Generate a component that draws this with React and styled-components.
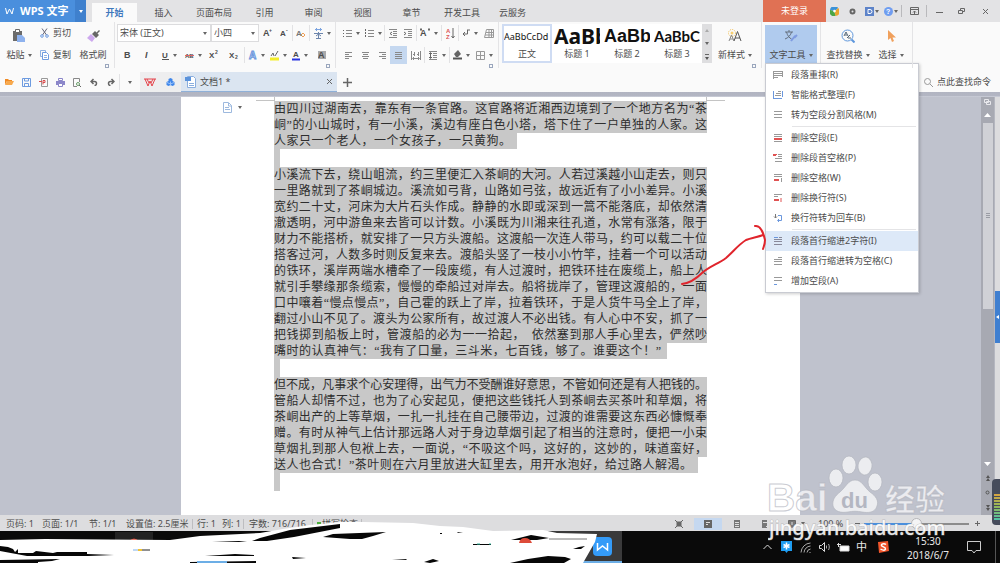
import React from "react";
import styled, { createGlobalStyle, css } from "styled-components";

const GlobalStyle = createGlobalStyle`
  *, *::before, *::after { box-sizing: border-box; }
  body {
    margin: 0;
    font-family: "Noto Sans", "Noto Sans CJK SC", sans-serif;
    font-size: 9px;
    line-height: 14px;
    color: #4c4c4c;
    background: #bfc2cd;
  }
  button, select, input {
    font: inherit;
    color: inherit;
    margin: 0;
    padding: 0;
    border: 0;
    background: none;
  }
`;

/* ---------- shared parts ---------- */

const Shell = styled.div`
  position: relative;
  display: flex;
  flex-direction: column;
  min-height: 100vh;
  overflow: hidden;
`;

const Caret = styled.i`
  flex: none;
  width: 0;
  height: 0;
  border: 2px solid transparent;
  border-top: 3px solid #666;
  border-bottom: 0;
`;

const Divider = styled.span`
  flex: none;
  width: 1px;
  height: ${(p) => p.$h || 16}px;
  background: ${(p) => p.$color || "#e2e2e4"};
`;

const Glyph = ({ w = 12, h = 12, box, children }) => (
  <svg width={w} height={h} viewBox={box || `0 0 ${w} ${h}`} fill="none" stroke="#666" aria-hidden="true">
    {children}
  </svg>
);

/* ---------- title bar ---------- */

const TitleBar = styled.header`
  display: flex;
  height: 22px;
  background: #e3e3e5;
`;

const Brand = styled.button`
  display: flex;
  align-items: center;
  gap: 6px;
  width: 75px;
  padding-left: 5px;
  background: #4a8fdd;
  color: #fff;
  font-size: 11px;
  font-weight: 700;
  white-space: nowrap;
`;

const BrandMore = styled.button`
  display: flex;
  align-items: center;
  justify-content: center;
  width: 11px;
  margin-right: 6px;
  background: #3f80cd;
  i { border-top-color: #fff; }
`;

const Tabs = styled.nav`
  display: flex;
  align-items: flex-end;
  flex: 1;
`;

const Tab = styled.button`
  min-width: 49px;
  height: 19px;
  padding: 0 8px;
  white-space: nowrap;
  ${(p) =>
    p.$active &&
    css`
      min-width: 45px;
      margin-right: 2px;
      background: #fafafa;
      color: #3f78bd;
      font-weight: 700;
    `}
`;

const Login = styled.button`
  width: 63px;
  background: #e07154;
  color: #fff;
`;

const WindowTools = styled.div`
  display: flex;
  align-items: center;
`;

const WindowButton = styled.button`
  display: flex;
  align-items: center;
  justify-content: center;
  gap: 1px;
  width: ${(p) => p.$w}px;
  height: 22px;
`;

/* ---------- ribbon ---------- */

const Ribbon = styled.section`
  position: relative;
  z-index: 3;
  display: flex;
  height: 50px;
  background: #fafafa;
`;

const Group = styled.div`
  position: relative;
  display: flex;
  flex: none;
  width: ${(p) => p.$w}px;
  height: 46px;
  padding: 1px 0 0 ${(p) => p.$pad || 0}px;
  border-right: 1px solid #e4e4e6;
`;

const Rows = styled.div`
  display: flex;
  flex-direction: column;
  gap: 2px;
`;

const Row = styled.div`
  display: flex;
  align-items: center;
  height: 20px;
`;

const Tool = styled.button`
  display: flex;
  align-items: center;
  justify-content: center;
  gap: 4px;
  width: ${(p) => p.$w}px;
  height: 18px;
  white-space: nowrap;
  background: ${(p) => (p.$active ? "#c5d8f0" : "none")};
`;

const BigTool = styled.button`
  display: flex;
  flex-direction: column;
  align-items: center;
  width: ${(p) => p.$w}px;
  height: 39px;
  margin-top: 2px;
  background: ${(p) => (p.$active ? "#b0cbee" : "none")};
`;

const BigIcon = styled.span`
  display: flex;
  align-items: center;
  justify-content: center;
  height: 22px;
`;

const BigLabel = styled.span`
  display: flex;
  align-items: center;
  gap: 3px;
  height: 16px;
  white-space: nowrap;
`;

const Launcher = styled.button`
  position: absolute;
  right: 5px;
  bottom: 0;
  width: 4px;
  height: 4px;
  border: 1px solid #9aa6bd;
`;

const Field = styled.label`
  position: relative;
  display: flex;
  align-items: center;
  width: ${(p) => p.$w}px;
  height: 18px;
  border: 1px solid #dcdcde;
  background: #fff;
  select {
    appearance: none;
    width: 100%;
    height: 16px;
    padding: 0 2px;
    outline: 0;
  }
  i { margin-right: 3px; }
`;

const Gallery = styled.div`
  display: flex;
  height: 39px;
  margin-top: 1px;
  background: #fff;
`;

const StyleCard = styled.button`
  display: flex;
  flex-direction: column;
  align-items: center;
  width: 50px;
  overflow: hidden;
  border: 2px solid ${(p) => (p.$active ? "#cfdcf3" : "transparent")};
`;

const Sample = styled.span`
  width: 46px;
  height: 21px;
  overflow: hidden;
  text-align: left;
  white-space: nowrap;
  line-height: 21px;
  color: #111;
  font-family: ${(p) => p.$font}, sans-serif;
  font-size: ${(p) => p.$size}px;
  font-weight: ${(p) => p.$weight};
`;

const GalleryScroll = styled.div`
  display: flex;
  flex-direction: column;
  width: 10px;
  background: #dedee0;
  button {
    display: flex;
    flex: 1;
    align-items: center;
    justify-content: center;
  }
`;

const MenuAnchor = styled.div`
  position: relative;
  padding: 1px 3px 0;
  height: 46px;
  border-right: 1px solid #e4e4e6;
`;

const Menu = styled.div`
  position: absolute;
  top: 41px;
  left: 3px;
  width: 154px;
  padding: 1px 0;
  border: 1px solid #c9cbd2;
  background: #fff;
  box-shadow: 1px 1px 3px rgba(0, 0, 0, 0.2);
  hr {
    height: 1px;
    margin: 1px 2px 1px 26px;
    border: 0;
    background: #e4e4e6;
  }
`;

const MenuItem = styled.button`
  display: flex;
  align-items: center;
  gap: 6px;
  width: 100%;
  height: 20px;
  padding-left: 7px;
  text-align: left;
  white-space: nowrap;
  background: ${(p) => (p.$active ? "#dde9f8" : "none")};
`;

/* ---------- quick access row ---------- */

const QuickRow = styled.div`
  display: flex;
  align-items: center;
  height: 20px;
  background: #fafafa;
`;

const QuickTools = styled.div`
  display: flex;
  align-items: center;
  width: 140px;
  padding-left: 1px;
`;

const Pinned = styled.div`
  display: flex;
  align-items: center;
  width: 41px;
  height: 20px;
  background: #eeeeef;
`;

const DocTab = styled.div`
  display: flex;
  align-items: center;
  gap: 4px;
  width: 156px;
  height: 20px;
  padding: 1px 4px 0;
  background: #dbe5f1;
  border-bottom: 1px solid #8fb0d8;
  span { flex: 1; }
`;

const CommandSearch = styled.label`
  display: flex;
  align-items: center;
  gap: 4px;
  margin-left: auto;
  input {
    width: 63px;
    outline: 0;
  }
  input::placeholder { color: #4c4c4c; opacity: 1; }
`;

const Band = styled.div`
  height: 5px;
  background: linear-gradient(#b1b4c1, #b3b6c3 70%, #cfd2dc);
`;

/* ---------- document ---------- */

const Workspace = styled.main`
  display: flex;
  flex: 1;
  background: #bfc2cd;
`;

const Canvas = styled.div`
  display: flex;
  flex: 1;
  justify-content: center;
`;

const Page = styled.article`
  position: relative;
  width: 619px;
  padding: 4px 93px 0 93px;
  background: #fff;
`;

const Corner = styled.span`
  position: absolute;
  top: 0;
  ${(p) => p.$side}: 75px;
  width: 19px;
  height: 4px;
  border-bottom: 1px solid #c4c4c4;
  border-${(p) => (p.$side === "left" ? "right" : "left")}: 1px solid #c4c4c4;
`;

const PasteHint = styled.button`
  position: absolute;
  top: 5px;
  left: 41px;
  display: flex;
  align-items: center;
  gap: 5px;
`;

const Paragraph = styled.p`
  margin: 0;
  font-family: "Liberation Serif", "Noto Sans CJK SC", serif;
  font-size: 12px;
  line-height: 16px;
  color: #2e2e2e;
`;

const Line = styled.span`
  display: block;
  width: ${(p) => (p.$w ? `${p.$w}px` : "100%")};
  height: 16px;
  padding-right: ${(p) => p.$tail || 0}px;
  background: #c8c8c8;
  white-space: nowrap;
  text-align: justify;
  text-align-last: justify;
`;

const BlankLine = styled.div`
  width: 6px;
  height: 18px;
  background: #c8c8c8;
`;

const ScrollTrack = styled.div`
  display: flex;
  flex-direction: column;
  align-items: center;
  width: 13px;
  padding: 0 1px;
  background: #a7a9b2;
`;

const TrackButton = styled.button`
  display: flex;
  align-items: center;
  justify-content: center;
  width: 11px;
  height: ${(p) => p.$h}px;
`;

const Thumb = styled.div`
  display: flex;
  align-items: center;
  justify-content: center;
  width: 10px;
  height: 186px;
  margin-bottom: auto;
  background: #d0d1d6;
`;

const SideRail = styled.aside`
  display: flex;
  flex-direction: column;
  width: 6px;
  padding-top: 194px;
  background: #dcdcde;
  border-left: 1px solid #b5b7c0;
`;

const RailHandle = styled.button`
  display: flex;
  align-items: center;
  justify-content: center;
  height: 52px;
  background: #3f7fd0;
`;

const Meter = styled.div`
  position: absolute;
  right: 0;
  bottom: 38px;
  z-index: 4;
  width: 8px;
  height: 46px;
  padding: 15px 0 5px 2px;
  border-radius: 4px 0 0 4px;
  background: #464c5c;
  div {
    height: 100%;
    background: repeating-linear-gradient(transparent 0 2px, #464c5c 2px 3px), linear-gradient(#d9a441, #8fb85a 50%, #4fc3a8);
  }
`;

/* ---------- status bar ---------- */

const StatusBar = styled.footer`
  display: flex;
  align-items: center;
  height: 16px;
  padding: 1px 0 0 6px;
  background: #dddddf;
  white-space: nowrap;
`;

const StatusItem = styled.span`
  flex: none;
  width: ${(p) => p.$w}px;
`;

const SpellCheck = styled.button`
  display: flex;
  align-items: center;
  gap: 1px;
  margin: 0 3px 0 4px;
  &::before {
    content: "";
    width: 4px;
    height: 4px;
    background: #4caf3c;
  }
`;

const ViewTools = styled.div`
  display: flex;
  align-items: center;
  margin-left: auto;
`;

const ViewButton = styled.button`
  display: flex;
  align-items: center;
  justify-content: center;
  gap: 5px;
  width: ${(p) => p.$w || 28}px;
  height: 12px;
  background: ${(p) => (p.$active ? "#c5d8f0" : "none")};
`;

const ZoomSlider = styled.input`
  appearance: none;
  width: 105px;
  height: 12px;
  &::-webkit-slider-runnable-track {
    height: 2px;
    background: linear-gradient(90deg, #4a8fdd 50%, #8c8c8c 50%);
  }
  &::-webkit-slider-thumb {
    appearance: none;
    width: 11px;
    height: 11px;
    margin-top: -5px;
    border: 1px solid #b5b5b8;
    border-radius: 50%;
    background: #f4f4f5;
  }
`;

/* ---------- task bar ---------- */

const TaskBar = styled.div`
  display: flex;
  align-items: center;
  height: 32px;
  background: #0a0a0a;
  color: #e8e8e8;
`;

const TaskSlot = styled.button`
  display: flex;
  align-items: center;
  justify-content: flex-end;
  width: 88px;
  height: 32px;
  margin-left: 534px;
  padding-right: 10px;
  background: #3a3a3b;
  border-bottom: 2px solid #6caee6;
`;

const Tray = styled.div`
  display: flex;
  align-items: center;
  margin-left: auto;
`;

const TrayButton = styled.button`
  display: flex;
  align-items: center;
  justify-content: center;
  width: ${(p) => p.$w || 19}px;
  height: 32px;
  font-size: 11px;
`;

const Clock = styled.time`
  width: 66px;
  padding-top: 2px;
  text-align: center;
  font-size: 10px;
  line-height: 14px;
`;

/* ---------- overlays ---------- */

const Scribble = styled.svg`
  position: absolute;
  left: 0;
  bottom: 0;
  z-index: 4;
  pointer-events: none;
`;

const ArrowMark = styled.svg`
  position: absolute;
  left: 676px;
  top: 220px;
  z-index: 5;
  pointer-events: none;
`;

const Watermark = styled.svg`
  position: absolute;
  right: 48px;
  bottom: 18px;
  z-index: 5;
  pointer-events: none;
`;

/* ---------- icons ---------- */

const PasteIcon = () => (
  <Glyph w={14} h={14}>
    <path d="M1 2h9v10H1z" fill="#6b6b6b" stroke="none" />
    <path d="M3.500 0.500h4v3h-4z" fill="#fff" stroke="#6b6b6b" />
    <path d="M5 6h5l3 3v4H5z" fill="#8eb2ee" stroke="none" />
  </Glyph>
);
const CutIcon = () => (
  <Glyph w={9} h={10}>
    <path d="M2 0.500L6.500 7M7 0.500L2.500 7" stroke="#667" />
    <circle cx="2" cy="8" r="1.300" stroke="#6d9be0" />
    <circle cx="7" cy="8" r="1.300" stroke="#6d9be0" />
  </Glyph>
);
const CopyIcon = () => (
  <Glyph w={9} h={10}>
    <path d="M0.500 0.500h5v6h-5z" stroke="#8fb1e2" />
    <path d="M2.500 2.500h4l2 2v5h-6z" fill="#fff" stroke="#6d9be0" />
    <path d="M4 5.500h3M4 7.500h3" stroke="#8fb1e2" />
  </Glyph>
);
const BrushIcon = () => (
  <Glyph w={14} h={14}>
    <path d="M9 2l1.500 1.500L13 1l1 1-2.500 2.500L13 6l-3 3-4-4z" fill="#666" stroke="none" />
    <path d="M5 5l4 4-3 4-5-4z" fill="#cda9ee" stroke="none" />
  </Glyph>
);
const letter = { stroke: "none", fill: "#4c4c4c", fontFamily: "Liberation Sans, sans-serif", fontWeight: 700 };
const LetterIcon = ({ w = 10, text, sup, sub, size = 9, fill, italic, underline, strike, extra }) => (
  <Glyph w={w} h={12}>
    {extra}
    <text x="0" y="9" {...letter} fontSize={size} fill={fill || "#4c4c4c"} fontStyle={italic ? "italic" : "normal"}>
      {text}
    </text>
    {sup && <text x="6" y="5" {...letter} fontSize="5">{sup}</text>}
    {sub && <text x="6" y="10" {...letter} fontSize="5">{sub}</text>}
    {underline && <path d="M0 10.500h7" stroke={underline} />}
    {strike && <path d="M0 6.500h9" stroke="#d66" />}
  </Glyph>
);
const ListIcon = ({ numbered }) => (
  <Glyph w={9} h={9}>
    <path d="M3 1.500h6M3 4.500h6M3 7.500h6" stroke="#888" />
    <path d={numbered ? "M0.500 0v9" : "M0 1.500h1M0 4.500h1M0 7.500h1"} strokeDasharray={numbered ? "2 1" : undefined} />
  </Glyph>
);
const IndentIcon = ({ out, spacing }) => (
  <Glyph w={9} h={9}>
    <path d="M0 0.500h8M4 2.500h4M4 4.500h4M4 6.500h4M0 8.500h8" stroke="#888" />
    <path d={spacing ? "M1.500 2v5M0 3l1.500-1.500L3 3M0 6l1.500 1.500L3 6" : out ? "M3 3L1 4.500 3 6" : "M0 3l2 1.500L0 6"} />
  </Glyph>
);
const AlignIcon = ({ d }) => (
  <Glyph w={9} h={9}>
    <path d={d} stroke="#888" />
  </Glyph>
);
const DistributeIcon = () => (
  <Glyph w={10} h={9}>
    <path d="M0.500 0v9M9.500 0v9M2 7.500h6M3 6L1.500 7.500 3 9M7 6l1.500 1.500L7 9M2 3.500h2M6 3.500h2M3.500 1v4M7.500 1v4" stroke="#888" />
  </Glyph>
);
const SortIcon = () => (
  <Glyph w={9} h={11}>
    <text x="0" y="5" {...letter} fill="#d55" fontSize="6">A</text>
    <text x="0" y="11" {...letter} fill="#d55" fontSize="6">Z</text>
    <path d="M7 0v10M5.500 8L7 10l1.500-2" />
  </Glyph>
);
const MarkIcon = () => (
  <Glyph w={8} h={9}>
    <path d="M5.500 1v4H1M3 3L1 5l2 2" />
    <path d="M5 1h3" />
  </Glyph>
);
const GridIcon = () => (
  <Glyph w={10} h={9}>
    <path d="M2.500 0.500h7v8h-9l2-8zM2 3.500h8M1 6h9M5 0v9M7.500 0v9" stroke="#999" />
  </Glyph>
);
const FillIcon = () => (
  <Glyph w={9} h={10}>
    <path d="M1 4l4-4 3 4-3 3H3z" fill="#666" stroke="none" />
    <path d="M0 8.500h9" stroke="#555" strokeWidth="2" />
  </Glyph>
);
const BorderIcon = () => (
  <Glyph w={9} h={9}>
    <path d="M0.500 0.500h8v8h-8zM4.500 0v9M0 4.500h9" stroke="#999" />
  </Glyph>
);
const NewStyleIcon = () => (
  <Glyph w={14} h={14}>
    <circle cx="4" cy="4" r="3.500" stroke="#f1bb4c" strokeDasharray="1 1" />
    <circle cx="4" cy="4" r="1.500" fill="#f7cf6f" stroke="none" />
    <path d="M1 12l2.500-6L6 12M2 10h3" stroke="#888" />
    <path d="M6 12l3.500-9.500L13 12M7 9h5" stroke="#555" />
  </Glyph>
);
const TextToolIcon = () => (
  <Glyph w={14} h={14}>
    <path d="M1 3h8M5 1v2M2.500 3c1 4 3 6 5 7M7.500 3C7 6 4 9 1 10" stroke="#65707f" />
    <path d="M13 6l-2 2-1-1M11 7l-4 5" stroke="#7f9be0" strokeWidth="2" />
  </Glyph>
);
const FindIcon = () => (
  <Glyph w={14} h={14}>
    <circle cx="6.500" cy="6.500" r="5.500" stroke="#5e97dc" />
    <path d="M10.500 10.500L13.500 13.500" stroke="#5e97dc" strokeWidth="2" />
    <path d="M3 7l2-4 2 4M4 6h2M6 9l3-3M7 9h3" stroke="#567" />
  </Glyph>
);
const CursorIcon = () => (
  <Glyph w={9} h={13}>
    <path d="M1 0v10l2.500-2L5 12l2-1-1.500-3.500H9z" fill="#f0a05c" stroke="none" />
  </Glyph>
);

const rule = (color, d) => <path key={color + d} d={d} stroke={color} />;
const menuIcons = {
  rearrange: [rule("#999", "M1 1.500h8M1 3.500h8M1 5.500h8M1 7.500h4M0.500 1v8M9.500 1v6")],
  smart: [rule("#6b97dd", "M0.500 1v8M9.500 1v6M1 8.500h8"), rule("#999", "M3 3.500h5M2 5.500h6M5 1.500h3")],
  split: [rule("#999", "M1 1.500h8M1 4.500h8M1 7.500h8")],
  delPara: [rule("#999", "M1 1.500h8M1 8.500h8M1 3.500h8"), rule("#e05252", "M1 5.500h8M1 6.500h8")],
  delHead: [rule("#e05252", "M0 1.500h4M0 2.500h3"), rule("#999", "M5 1.500h4M5 3.500h4M2 5.500h7M2 8.500h7")],
  delSpace: [rule("#999", "M1 1.500h8M1 3.500h8M8.500 5v4"), rule("#e05252", "M1 6.500h5M1 7.500h5")],
  delBreak: [rule("#999", "M1 1.500h8M1 3.500h4"), rule("#e05252", "M1 6.500h5M1 7.500h5M8 5v4")],
  toReturn: [rule("#777", "M2.500 1v4M1 3.500l1.500 1.500L4 3.500"), rule("#6b97dd", "M5 2.500h3.500v5H5M6 6L4.500 7.500 6 9")],
  indent2: [rule("#6b97dd", "M1 1.500h4"), rule("#889", "M6 1.500h3M1 3.500h8M1 5.500h8M1 8.500h8")],
  indentSpace: [rule("#999", "M5 1.500h4M1 3.500h8M1 5.500h8M1 8.500h8")],
  addPara: [rule("#999", "M1 1.500h8M1 4.500h8"), rule("#6b97dd", "M1 8.500h3")],
};

/* ---------- content ---------- */

const tabs = ["开始", "插入", "页面布局", "引用", "审阅", "视图", "章节", "开发工具", "云服务"];

const menu = [
  ["rearrange", "段落重排(R)"],
  ["smart", "智能格式整理(F)"],
  ["split", "转为空段分割风格(M)"],
  null,
  ["delPara", "删除空段(E)"],
  ["delHead", "删除段首空格(P)"],
  ["delSpace", "删除空格(W)"],
  ["delBreak", "删除换行符(S)"],
  ["toReturn", "换行符转为回车(B)"],
  null,
  ["indent2", "段落首行缩进2字符(I)"],
  ["indentSpace", "段落首行缩进转为空格(C)"],
  ["addPara", "增加空段(A)"],
];

const paragraphs = [
  {
    lastWidth: 243,
    lines: [
      "由四川过湖南去，靠东有一条官路。这官路将近湘西边境到了一个地方名为“茶",
      "峒”的小山城时，有一小溪，溪边有座白色小塔，塔下住了一户单独的人家。这",
      "人家只一个老人，一个女孩子，一只黄狗。",
    ],
  },
  {
    lastWidth: 393,
    lines: [
      "小溪流下去，绕山岨流，约三里便汇入茶峒的大河。人若过溪越小山走去，则只",
      "一里路就到了茶峒城边。溪流如弓背，山路如弓弦，故远近有了小小差异。小溪",
      "宽约二十丈，河床为大片石头作成。静静的水即或深到一篙不能落底，却依然清",
      "澈透明，河中游鱼来去皆可以计数。小溪既为川湘来往孔道，水常有涨落，限于",
      "财力不能搭桥，就安排了一只方头渡船。这渡船一次连人带马，约可以载二十位",
      "搭客过河，人数多时则反复来去。渡船头竖了一枝小小竹竿，挂着一个可以活动",
      "的铁环，溪岸两端水槽牵了一段废缆，有人过渡时，把铁环挂在废缆上，船上人",
      "就引手攀缘那条缆索，慢慢的牵船过对岸去。船将拢岸了，管理这渡船的，一面",
      "口中嚷着“慢点慢点”，自己霍的跃上了岸，拉着铁环，于是人货牛马全上了岸，",
      "翻过小山不见了。渡头为公家所有，故过渡人不必出钱。有人心中不安，抓了一",
      "把钱掷到船板上时，管渡船的必为一一拾起，　依然塞到那人手心里去，俨然吵",
      "嘴时的认真神气：“我有了口量，三斗米，七百钱，够了。谁要这个！”",
    ],
  },
  {
    lastWidth: 424,
    lines: [
      "但不成，凡事求个心安理得，出气力不受酬谁好意思，不管如何还是有人把钱的。",
      "管船人却情不过，也为了心安起见，便把这些钱托人到茶峒去买茶叶和草烟，将",
      "茶峒出产的上等草烟，一扎一扎挂在自己腰带边，过渡的谁需要这东西必慷慨奉",
      "赠。有时从神气上估计那远路人对于身边草烟引起了相当的注意时，便把一小束",
      "草烟扎到那人包袱上去，一面说，“不吸这个吗，这好的，这妙的，味道蛮好，",
      "送人也合式！”茶叶则在六月里放进大缸里去，用开水泡好，给过路人解渴。",
    ],
  },
];

const styles = [
  { sample: "AaBbCcDd", label: "正文", font: "Noto Sans", size: 9, weight: 400 },
  { sample: "AaBb", label: "标题 1", font: "Noto Sans", size: 21, weight: 700 },
  { sample: "AaBb", label: "标题 2", font: "Liberation Sans", size: 18, weight: 700 },
  { sample: "AaBbC", label: "标题 3", font: "Lato", size: 15, weight: 700 },
];

const Big = ({ w, icon, label, active, caret = true, ...rest }) => (
  <BigTool $w={w} $active={active} {...rest}>
    <BigIcon>{icon}</BigIcon>
    <BigLabel>
      {label}
      {caret && <Caret />}
    </BigLabel>
  </BigTool>
);

const Cell = ({ w, caret, active, label, children }) => (
  <Tool $w={w} $active={active} aria-label={label}>
    {children}
    {caret && <Caret />}
  </Tool>
);

function ClipboardGroup() {
  return (
    <Group $w={115} $pad={2}>
      <Big w={34} icon={<PasteIcon />} label="粘贴" />
      <Rows>
        <Row>
          <Tool $w={39}><CutIcon />剪切</Tool>
        </Row>
        <Row>
          <Tool $w={39}><CopyIcon />复制</Tool>
        </Row>
      </Rows>
      <Big w={36} icon={<BrushIcon />} label="格式刷" caret={false} />
      <Launcher aria-label="剪贴板" />
    </Group>
  );
}

function FontGroup() {
  return (
    <Group $w={221} $pad={2}>
      <Rows>
        <Row>
          <Field $w={94}>
            <select aria-label="字体"><option>宋体 (正文)</option></select>
            <Caret />
          </Field>
          <Field $w={48}>
            <select aria-label="字号"><option>小四</option></select>
            <Caret />
          </Field>
          <Cell w={18} label="增大字号"><LetterIcon text="A" sup="+" /></Cell>
          <Cell w={15} label="减小字号"><LetterIcon text="A" sup="-" size={8} /></Cell>
          <Divider />
          <Cell w={16} label="清除格式">
            <LetterIcon text="A" size={8} fill="#777" extra={<path d="M5 8l2-2 2 2-2 2z" stroke="#ee9d55" />} />
          </Cell>
          <Divider />
          <Cell w={24} caret label="拼音指南">
            <Glyph w={9} h={11}>
              <path d="M1 1.500h7M2.500 0v3M6.500 0v3" stroke="#7aa3e0" />
              <path d="M0 5.500h9M4.500 4v6M2 8l2.500-2L7 8M2 10.500h5" stroke="#6c85ac" />
            </Glyph>
          </Cell>
        </Row>
        <Row>
          <Cell w={20} label="加粗"><LetterIcon w={7} text="B" /></Cell>
          <Cell w={20} label="倾斜"><LetterIcon w={5} text="I" italic /></Cell>
          <Cell w={24} caret label="下划线"><LetterIcon w={7} text="U" size={8} underline="#555" /></Cell>
          <Cell w={24} caret label="删除线"><LetterIcon w={9} text="AB" size={6} strike /></Cell>
          <Cell w={18} label="上标"><LetterIcon text="X" sup="2" size={8} /></Cell>
          <Cell w={21} label="下标"><LetterIcon text="X" sub="2" size={8} /></Cell>
          <Divider />
          <Cell w={22} caret label="文字效果">
            <Glyph w={9} h={12}>
              <text x="1" y="10" {...letter} fontSize="10" fill="#fff" stroke="#6b97dd">A</text>
            </Glyph>
          </Cell>
          <Cell w={22} caret label="突出显示">
            <Glyph w={9} h={12}>
              <path d="M0 10h9" stroke="#f4ee2a" strokeWidth="3" />
              <path d="M1 7l2-3 1 3M5 7l3-5" />
            </Glyph>
          </Cell>
          <Cell w={22} caret label="字体颜色">
            <Glyph w={8} h={12}>
              <text x="1" y="8" {...letter} fontSize="8">A</text>
              <path d="M0 10.500h8" stroke="#2a34e0" strokeWidth="2" />
            </Glyph>
          </Cell>
          <Cell w={22} label="字符底纹">
            <LetterIcon w={8} text="A" extra={<path d="M0 2h8v8H0z" fill="#a9a9ab" stroke="none" />} />
          </Cell>
        </Row>
      </Rows>
      <Launcher aria-label="字体设置" />
    </Group>
  );
}

function ParagraphGroup() {
  return (
    <Group $w={163} $pad={4}>
      <Rows>
        <Row>
          <Cell w={22} caret label="项目符号"><ListIcon /></Cell>
          <Cell w={22} caret label="编号"><ListIcon numbered /></Cell>
          <Divider />
          <Cell w={16} label="减少缩进"><IndentIcon out /></Cell>
          <Cell w={15} label="增加缩进"><IndentIcon /></Cell>
          <Divider />
          <Cell w={24} caret label="中文版式"><LetterIcon text="A" extra={<path d="M0 2.500h2M8 2.500h2M1 1v3M9 1v3" />} /></Cell>
          <Divider />
          <Cell w={16} label="排序"><SortIcon /></Cell>
          <Divider />
          <Cell w={22} caret label="显示标记"><MarkIcon /></Cell>
          <Cell w={15} label="制表位"><GridIcon /></Cell>
        </Row>
        <Row>
          <Cell w={17} label="左对齐"><AlignIcon d="M1 1.500h7M1 3.500h4M1 5.500h7M1 7.500h4" /></Cell>
          <Cell w={17} label="居中"><AlignIcon d="M1 1.500h7M2 3.500h5M1 5.500h7M2 7.500h5" /></Cell>
          <Cell w={16} label="右对齐"><AlignIcon d="M1 1.500h7M4 3.500h4M1 5.500h7M4 7.500h4" /></Cell>
          <Cell w={17} active label="两端对齐"><AlignIcon d="M1 1.500h7M1 3.500h7M1 5.500h7M1 7.500h7" /></Cell>
          <Cell w={17} label="分散对齐"><DistributeIcon /></Cell>
          <Divider />
          <Cell w={24} caret label="行距"><IndentIcon spacing /></Cell>
          <Divider />
          <Cell w={23} caret label="底纹颜色"><FillIcon /></Cell>
          <Cell w={22} caret label="边框"><BorderIcon /></Cell>
        </Row>
      </Rows>
      <Launcher aria-label="段落设置" />
    </Group>
  );
}

function StylesGroup() {
  return (
    <Group $w={263} $pad={3}>
      <Gallery>
        {styles.map((s, i) => (
          <StyleCard key={s.label} $active={i === 0}>
            <Sample $font={s.font} $size={s.size} $weight={s.weight}>{s.sample}</Sample>
            {s.label}
          </StyleCard>
        ))}
        <GalleryScroll>
          <button aria-label="上一行"><Glyph w={4} h={3}><path d="M0 3l2-3 2 3z" fill="#aaa" stroke="none" /></Glyph></button>
          <button aria-label="下一行"><Caret /></button>
          <button aria-label="更多样式"><Glyph w={4} h={6}><path d="M0 0.500h4" /><path d="M0 3h4l-2 3z" fill="#555" stroke="none" /></Glyph></button>
        </GalleryScroll>
      </Gallery>
      <Big w={46} icon={<NewStyleIcon />} label="新样式" />
      <Launcher aria-label="样式设置" />
    </Group>
  );
}

function TextToolMenu() {
  return (
    <MenuAnchor>
      <Big w={52} active icon={<TextToolIcon />} label="文字工具" aria-expanded="true" />
      <Menu role="menu">
        {menu.map((item, i) =>
          item ? (
            <MenuItem key={item[0]} role="menuitem" $active={item[0] === "indent2"}>
              <Glyph w={12} h={10}>{menuIcons[item[0]]}</Glyph>
              {item[1]}
            </MenuItem>
          ) : (
            <hr key={i} />
          )
        )}
      </Menu>
    </MenuAnchor>
  );
}

function Header() {
  return (
    <TitleBar>
      <Brand>
        <Glyph w={9} h={8}>
          <path d="M0.500 1l1.500 6L4.500 2 7 7l1.500-6" stroke="#fff" />
        </Glyph>
        WPS 文字
      </Brand>
      <BrandMore aria-label="菜单"><Caret /></BrandMore>
      <Tabs>
        {tabs.map((t, i) => (
          <Tab key={t} $active={i === 0}>{t}</Tab>
        ))}
      </Tabs>
      <Login>未登录</Login>
      <WindowTools>
        <WindowButton $w={17} aria-label="浏览器">
          <Glyph w={9} h={9} box="0 0 10 10">
            <path d="M5 5L0 3A5 5 0 0 1 9 1z" fill="#3a92d8" stroke="none" />
            <path d="M5 5l4-4a5 5 0 0 1-3 9z" fill="#e9a52d" stroke="none" />
            <path d="M5 5l1 5A5 5 0 0 1 0 3z" fill="#4aa545" stroke="none" />
            <circle cx="5" cy="4.500" r="1.500" fill="#fff" stroke="none" />
          </Glyph>
        </WindowButton>
        <WindowButton $w={19} aria-label="设置">
          <Glyph w={7} h={7}><circle cx="3.500" cy="3.500" r="2" stroke="#666" strokeWidth="2" /></Glyph>
        </WindowButton>
        <WindowButton $w={19} aria-label="换肤">
          <Glyph w={9} h={9}>
            <path d="M0 0h9v9H0z" fill="#5d83c9" stroke="none" />
            <path d="M3 2.500h2a2 2 0 0 1 0 4H3z" stroke="#fff" />
          </Glyph>
          <Caret />
        </WindowButton>
        <WindowButton $w={20} aria-label="帮助">
          <Glyph w={9} h={9}>
            <circle cx="4.500" cy="4.500" r="4.500" fill="#6f9df0" stroke="none" />
            <text x="2" y="7" {...letter} fontSize="7" fill="#fff">?</text>
          </Glyph>
          <Caret />
        </WindowButton>
        <Divider $h={12} $color="#b9b9bc" />
        <WindowButton $w={24} aria-label="功能区">
          <Glyph w={9} h={9}><path d="M0.500 0.500h8v7h-8zM0 2.500h9M4.500 4v4M3 5.500L4.500 4 6 5.500" /></Glyph>
        </WindowButton>
        <Divider $h={12} $color="#b9b9bc" />
        <WindowButton $w={24} aria-label="最小化"><Glyph w={7} h={7}><path d="M0 4.500h7" /></Glyph></WindowButton>
        <WindowButton $w={20} aria-label="还原"><Glyph w={7} h={7}><path d="M2.500 2.500v-2h4v3h-2M0.500 2.500h4v3h-4z" /></Glyph></WindowButton>
        <WindowButton $w={29} aria-label="关闭"><Glyph w={7} h={7}><path d="M1 1l5 5M6 1L1 6" /></Glyph></WindowButton>
      </WindowTools>
    </TitleBar>
  );
}

function QuickAccess() {
  return (
    <QuickRow>
      <QuickTools>
        <Cell w={17} label="打开"><Glyph w={9} h={8}><path d="M0 1h3l1 1h3v1H2L0 7z" fill="#f08a24" stroke="none" /><path d="M2 3h7L7 7H0z" fill="#f7a94e" stroke="none" /></Glyph></Cell>
        <Cell w={17} label="保存"><Glyph w={9} h={9}><path d="M0.500 0.500h8v8h-8zM2.500 1v2h4V1M2.500 8V5.500h4V8" stroke="#6d9be0" /></Glyph></Cell>
        <Cell w={17} label="输出为PDF"><Glyph w={9} h={9}><path d="M2.500 0.500h6v8h-6z" stroke="#999" /><path d="M0 3.500h3M4 6.500V2.500h2v2H4" stroke="#d94b4b" /></Glyph></Cell>
        <Cell w={16} label="打印"><Glyph w={9} h={9}><path d="M0 3h9v4H0z" fill="#8b86c9" stroke="none" /><path d="M2.500 0.500h4v2h-4zM2.500 5.500h4v3h-4z" fill="#fff" stroke="#8b86c9" /></Glyph></Cell>
        <Cell w={17} label="打印预览"><Glyph w={9} h={9}><path d="M7.500 4V0.500h-6v8H5" stroke="#888" /><circle cx="6" cy="6" r="1.500" stroke="#6a9e6a" /><path d="M7 7l2 2" /></Glyph></Cell>
        <Cell w={17} label="撤销"><Glyph w={8} h={8}><path d="M1 3.500h3.500a2 2 0 0 1 0 4M3.500 1L1 3.500 3.500 6" strokeWidth="1.500" /></Glyph></Cell>
        <Cell w={17} label="恢复"><Glyph w={8} h={8}><path d="M7 3.500H3.500a2 2 0 0 0 0 4M4.500 1L7 3.500 4.500 6" strokeWidth="1.500" /></Glyph></Cell>
        <Divider />
        <Cell w={19} caret label="自定义" />
      </QuickTools>
      <Pinned>
        <Cell w={20} label="WPS 首页"><Glyph w={12} h={9}><path d="M0 1h12M1 1l3 7L6 3l2 5 3-7M3 1l2 4M9 1L7 5" stroke="#e5424a" /></Glyph></Cell>
        <Cell w={20} label="云文档"><Glyph w={9} h={9}><path d="M4.500 0l2 1v2l2 1v3l-2 1-2-1-2 1-2-1V4l2-1V1z" fill="#3f86ea" stroke="none" /><path d="M4.500 3.500v4M1 4.500l3.500 1.500L8 4.500" stroke="#9cc2f7" /></Glyph></Cell>
      </Pinned>
      <DocTab>
        <Glyph w={11} h={12}>
          <path d="M2.500 0.500h6l2 2v9h-8z" fill="#fff" stroke="#8aaede" />
          <path d="M0 1h6v4H0z" fill="#5a93dc" stroke="none" />
          <path d="M4 7.500h5M4 9.500h5" stroke="#8aaede" />
        </Glyph>
        <span>文档1 *</span>
        <button aria-label="关闭文档"><Glyph w={7} h={7}><path d="M1 1l5 5M6 1L1 6" /></Glyph></button>
      </DocTab>
      <Cell w={20} label="新建"><Glyph w={9} h={9}><path d="M4.500 0v9M0 4.500h9" strokeWidth="1.500" /></Glyph></Cell>
      <CommandSearch>
        <Glyph w={9} h={9}><circle cx="3.500" cy="3.500" r="3" stroke="#999" /><path d="M6 6l3 3" stroke="#999" /></Glyph>
        <input aria-label="查找命令" placeholder="点此查找命令" />
      </CommandSearch>
    </QuickRow>
  );
}

function Document() {
  return (
    <Workspace>
      <Canvas>
        <Page lang="zh-CN">
          <Corner $side="left" />
          <Corner $side="right" />
          <PasteHint aria-label="段落布局">
            <Glyph w={11} h={11}><path d="M1.500 0.500h5l3 3v7h-8zM6.500 1v3h3M3 5.500h4M3 7.500h5" stroke="#9db9de" /></Glyph>
            <Caret />
          </PasteHint>
          {paragraphs.map((p, i) => (
            <React.Fragment key={i}>
              <Paragraph>
                {p.lines.map((line, n) => {
                  const last = n === p.lines.length - 1;
                  return (
                    <Line key={n} $w={last ? p.lastWidth : 0} $tail={last ? 6 : 0}>{line}</Line>
                  );
                })}
              </Paragraph>
              <BlankLine />
            </React.Fragment>
          ))}
        </Page>
      </Canvas>
      <ScrollTrack>
        <TrackButton $h={10} aria-label="标尺"><Glyph w={7} h={6}><path d="M0.500 0.500h4v3h-4zM2.500 2.500h4v3h-4z" stroke="#e8e8ec" /></Glyph></TrackButton>
        <TrackButton $h={16} aria-label="向上"><Glyph w={7} h={4}><path d="M0 4l3.500-4L7 4z" fill="#fff" stroke="none" /></Glyph></TrackButton>
        <Thumb><Glyph w={4} h={6}><path d="M0 0.500h4M0 2.500h4M0 4.500h4" stroke="#9a9ca4" /></Glyph></Thumb>
        <TrackButton $h={14} aria-label="向下"><Glyph w={7} h={4}><path d="M0 0h7L3.500 4z" fill="#fff" stroke="none" /></Glyph></TrackButton>
        <TrackButton $h={14} aria-label="上一页"><Glyph w={4} h={6}><path d="M0 3l2-3 2 3zM0 6l2-3 2 3z" fill="#555" stroke="none" /></Glyph></TrackButton>
        <TrackButton $h={15} aria-label="选择浏览对象"><Glyph w={5} h={5}><circle cx="2.500" cy="2.500" r="1.500" stroke="#555" /></Glyph></TrackButton>
        <TrackButton $h={15} aria-label="下一页"><Glyph w={4} h={6}><path d="M0 0h4L2 3zM0 3h4L2 6z" fill="#555" stroke="none" /></Glyph></TrackButton>
      </ScrollTrack>
      <SideRail>
        <RailHandle aria-label="展开侧栏"><Glyph w={3} h={4}><path d="M3 0v4L0 2z" fill="#fff" stroke="none" /></Glyph></RailHandle>
      </SideRail>
    </Workspace>
  );
}

function Status() {
  return (
    <StatusBar>
      <StatusItem $w={36}>页码: 1</StatusItem>
      <StatusItem $w={47}>页面: 1/1</StatusItem>
      <StatusItem $w={37}>节: 1/1</StatusItem>
      <StatusItem $w={66}>设置值: 2.5厘米</StatusItem>
      <Divider $h={10} $color="#bdbdc0" />
      <StatusItem $w={4} />
      <StatusItem $w={25}>行: 1</StatusItem>
      <StatusItem $w={21}>列: 1</StatusItem>
      <Divider $h={10} $color="#bdbdc0" />
      <StatusItem $w={5} />
      <StatusItem $w={63}>字数: 716/716</StatusItem>
      <Divider $h={10} $color="#bdbdc0" />
      <SpellCheck>拼写检查</SpellCheck>
      <Divider $h={10} $color="#bdbdc0" />
      <ViewTools>
        <ViewButton $w={30} aria-label="全屏"><Glyph w={8} h={8}><path d="M2 2h4v4H2z" fill="#666" /><path d="M0 0l2 2M8 0L6 2M0 8l2-2M8 8L6 6" /></Glyph></ViewButton>
        <ViewButton $active aria-label="页面视图"><Glyph w={8} h={8}><path d="M0 0h8v8H0z" fill="#666" stroke="none" /><path d="M2 2.500h4M2 4.500h2" stroke="#ddd" /></Glyph></ViewButton>
        <ViewButton $w={29} aria-label="大纲视图"><Glyph w={8} h={8}><path d="M1 0h6v8H1z" fill="#777" stroke="none" /><path d="M2 2.500h4M2 4.500h4M2 6.500h4" stroke="#ddd" /></Glyph></ViewButton>
        <ViewButton $w={28} aria-label="阅读版式"><Glyph w={8} h={8}><path d="M1 0h5v8H1z" fill="#777" stroke="none" /><path d="M2 2.500h4M5 6.500h3" stroke="#ddd" /></Glyph></ViewButton>
        <ViewButton $w={34} aria-label="护眼模式"><Glyph w={8} h={8}><path d="M0.500 0.500h7v4l-3.500 3-3.500-3z" fill="#777" /><path d="M4 2v3" stroke="#ddd" /></Glyph><Caret /></ViewButton>
        <StatusItem $w={5} />
        <StatusItem $w={32}>100 %</StatusItem>
        <ViewButton $w={14} aria-label="缩小"><Glyph w={5} h={5}><path d="M0 2.500h5" /></Glyph></ViewButton>
        <ZoomSlider type="range" aria-label="显示比例" defaultValue={50} />
        <ViewButton $w={16} aria-label="放大"><Glyph w={5} h={5}><path d="M0 2.500h5M2.500 0v5" /></Glyph></ViewButton>
        <StatusItem $w={15} />
      </ViewTools>
    </StatusBar>
  );
}

function Tasks() {
  return (
    <TaskBar>
      <TaskSlot aria-label="WPS 文字">
        <Glyph w={19} h={19}>
          <rect width="19" height="19" rx="4" fill="#349bf8" stroke="none" />
          <path d="M4.500 6v7l5-4 5 4V6" stroke="#fff" strokeWidth="1.500" />
        </Glyph>
      </TaskSlot>
      <Tray>
        <TrayButton aria-label="显示隐藏的图标"><Glyph w={9} h={6}><path d="M0.500 5L4.500 1l4 4" stroke="#ddd" /></Glyph></TrayButton>
        <TrayButton aria-label="助手">
          <Glyph w={11} h={12}>
            <path d="M0 0h11v10H7l-1.500 2L4 10H0z" fill="#1e9df2" stroke="none" />
            <path d="M5.500 1.500v7M2.500 3.500l6 3M8.500 3.500l-6 3" stroke="#fff" strokeWidth="1.500" />
          </Glyph>
        </TrayButton>
        <TrayButton aria-label="网络"><Glyph w={11} h={11}><path d="M1 10.500A10 10 0 0 1 10.500 1M4 10.500A7 7 0 0 1 10.500 4M7 10.500A4 4 0 0 1 10.500 7M9.500 10.500h1" stroke="#aaa" /></Glyph></TrayButton>
        <TrayButton aria-label="音量"><Glyph w={12} h={10}><path d="M0.500 3.500h2l3-3v9l-3-3h-2z" stroke="#ddd" /><path d="M7.500 3.500v3M9.500 2c1 2 1 4 0 6" stroke="#aaa" /></Glyph></TrayButton>
        <TrayButton aria-label="电池"><Glyph w={13} h={9}><path d="M3 3h9v5H3z" fill="#fff" stroke="#ddd" /><path d="M0 1.500h4M1.500 0v4" stroke="#ddd" /></Glyph></TrayButton>
        <TrayButton $w={17}>中</TrayButton>
        <TrayButton $w={25} aria-label="输入法">
          <Glyph w={12} h={12}>
            <path d="M1 1l10-1 1 10-10 2z" fill="#f0552b" stroke="none" />
            <path d="M9 3.500C7 2 4 3 4.500 4.500S9 6 8.500 8 5 9 3.500 8" stroke="#fff" strokeWidth="1.500" />
          </Glyph>
        </TrayButton>
        <Clock>15:30<br />2018/6/7</Clock>
        <TrayButton $w={26} aria-label="通知"><Glyph w={14} h={13}><path d="M0.500 0.500h13v9H9l-2 2.500-2-2.500H0.500z" stroke="#ccc" /></Glyph></TrayButton>
        <StatusItem $w={8} />
        <Divider $h={32} $color="#555" />
        <StatusItem $w={4} />
      </Tray>
    </TaskBar>
  );
}

const Scrawl = () => (
  <Scribble width="600" height="42" viewBox="0 521 600 42" aria-hidden="true">
    <path d="M115 532h38v8h-38z" fill="#222" />
    <path d="M129 541q5-5 10 0z" fill="#d9402c" />
    <path
      d="M0 540L45 539 170 540 185 538 200 536 260 533 283 529 310 525 340 522 363 522 413 523 440 526 463 527 493 531 543 530 557 533 597 534 595 542 583 563H0z"
      fill="#fff"
    />
    <g fill="#070707">
      <path d="M0 546l8 1 5 2 2 3 3-3v4h15l3-2 17 2 4-1h30v2l27 1-26 1H27L0 551z" />
      <path d="M0 560l60-1-8 2-14 1v1H0z" />
      <path d="M252 541l8-3 30-8 50-6v4l-46 9-27 4z" />
      <path d="M323 537l10-3 53-2-13 4-11 3h-12z" />
      <path d="M205 556l30-2 19 1v1zM292 557l14 1-13 1zM212 541l35 0-8 1zM190 562l66-1v2h-66zM392 559l14 0 1 1zM424 562l9-3 6 2-9 2z" />
      <path d="M440 533h2v1h-2zM457 532l6 1h-5zM473 544h18v1h-18z" />
      <path d="M511 540l20-5 18 3-12 2zM573 549l6-2 6-1-4 3zM510 563l18-4 20-3 17 1 6 2-7 4z" />
    </g>
    <path d="M549 539h38" stroke="#777" />
    <path d="M519 543q1-5 6-5t7 5z" fill="#dd4b39" />
    <path d="M197 562h30" stroke="#6caee6" strokeWidth="2" />
    <path d="M133 550h8" stroke="#7fb0ea" />
    <path d="M138 550h4" stroke="#f2c230" strokeWidth="2" />
    <path d="M142 550h8" stroke="#222" />
    <path d="M477 544h3M489 544h2" stroke="#2fb59b" />
  </Scribble>
);

const Logo = () => (
  <Watermark width="184" height="92" viewBox="0 0 184 92" role="img" aria-label="Baidu 经验">
    <g fill="#fff" fillOpacity="0.700" stroke="#b4b6bf" strokeOpacity="0.700">
      <ellipse cx="68" cy="25" rx="7" ry="9" />
      <ellipse cx="81" cy="12" rx="7" ry="9" />
      <ellipse cx="97" cy="13" rx="7" ry="9" transform="rotate(8 97 13)" />
      <ellipse cx="107" cy="29" rx="7" ry="9" />
      <path d="M87 27c7 0 9 7 15 12 6 4 9 9 7 14-2 7-9 7-15 6-5-1-9-1-14 0-7 1-13 0-15-6-1-6 2-10 7-14 6-5 8-12 15-12z" />
      <g fontFamily="Liberation Sans, Noto Sans CJK SC, sans-serif" fontWeight="700">
        <text x="-1" y="58" fontSize="39">Bai</text>
        <text x="117" y="57" fontSize="30">经验</text>
        <text x="73" y="55" fontSize="22" fill="#b4b7c2" fillOpacity="1" stroke="none">du</text>
      </g>
    </g>
    <text
      x="1"
      y="82"
      fontSize="20"
      fontFamily="Noto Sans, sans-serif"
      fontWeight="500"
      fill="#fff"
      fillOpacity="0.900"
      stroke="#9c9c9c"
      strokeOpacity="0.500"
      paintOrder="stroke"
    >
      jingyan.baidu.com
    </text>
  </Watermark>
);

export default function App() {
  return (
    <Shell>
      <GlobalStyle />
      <Header />
      <Ribbon>
        <ClipboardGroup />
        <FontGroup />
        <ParagraphGroup />
        <StylesGroup />
        <TextToolMenu />
        <Group $w={92} $pad={2}>
          <Big w={50} icon={<FindIcon />} label="查找替换" />
          <Big w={36} icon={<CursorIcon />} label="选择" />
        </Group>
      </Ribbon>
      <QuickAccess />
      <Band />
      <Document />
      <Status />
      <Tasks />
      <Meter><div /></Meter>
      <Scrawl />
      <Logo />
      <ArrowMark width="94" height="68" viewBox="676 220 94 68" fill="none" stroke="#e0242c" strokeWidth="2" strokeLinecap="round" aria-hidden="true">
        <path d="M682 284c8-1 14-5 20-11 8-7 16-9 24-15 7-6 12-13 20-18 5-2 12-3 17-5" />
        <path d="M755 226c5-1 8 5 10 14 0 4-1 6-2 9" />
      </ArrowMark>
    </Shell>
  );
}
